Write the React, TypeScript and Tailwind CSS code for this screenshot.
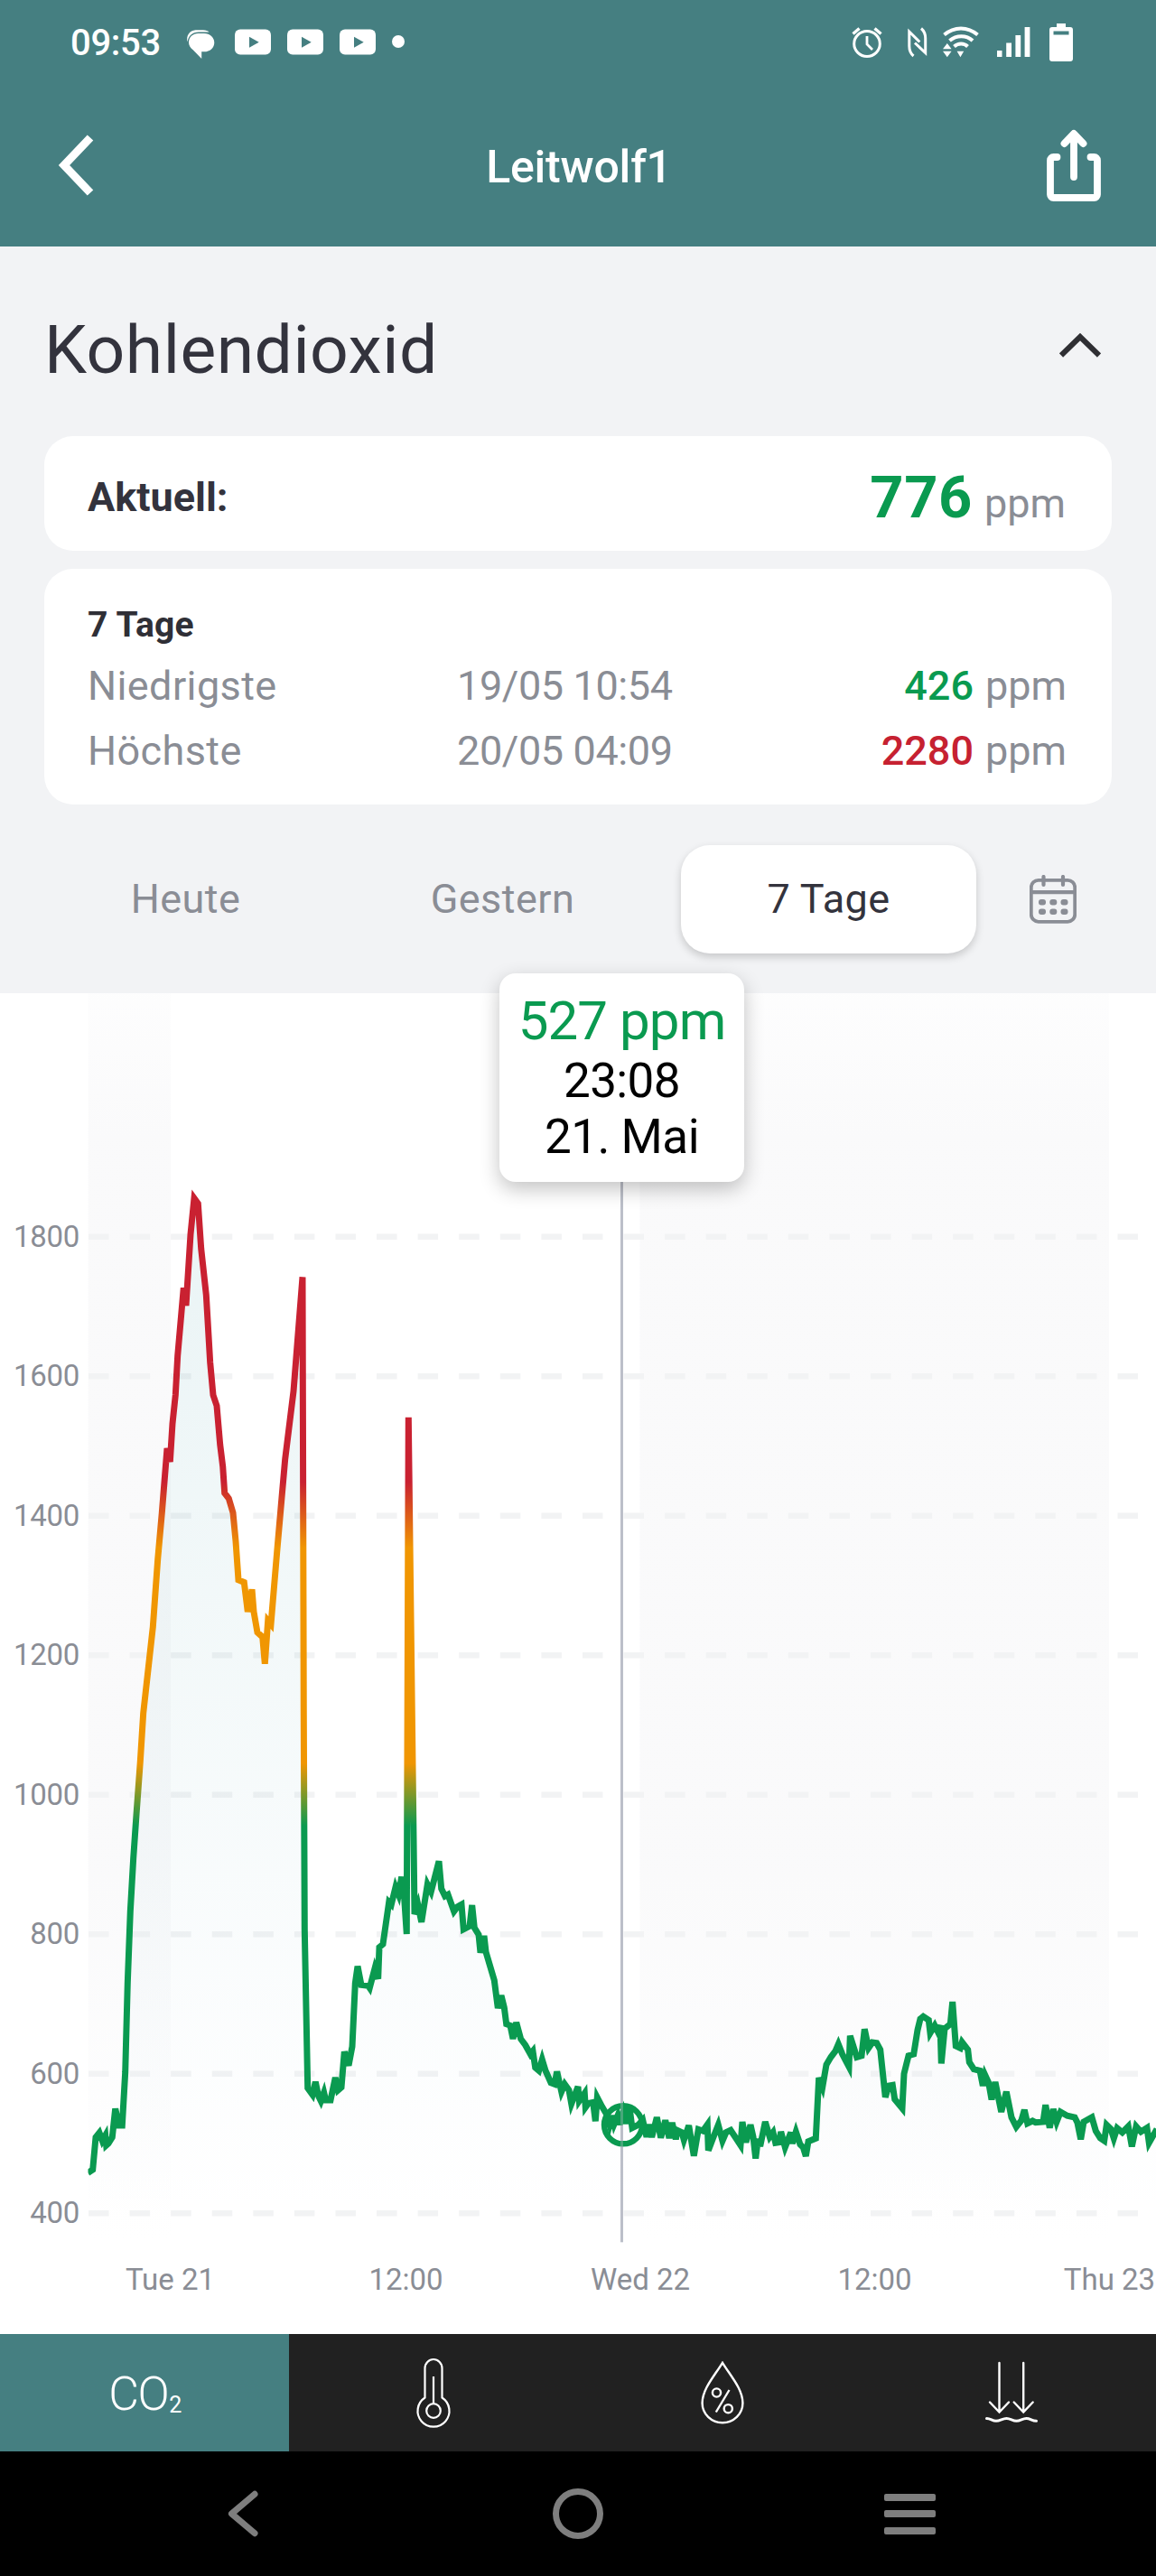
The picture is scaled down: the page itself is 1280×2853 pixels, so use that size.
import React from "react";

/* ---------- Status bar icons ---------- */

function ChatIcon() {
  return (
    <svg width="34" height="34" viewBox="0 0 34 34" className="shrink-0">
      <path d="M2.600 15.500C0.800 8.500 5 2.800 11.500 2.300H20c3 0 5.300.9 6.500 2.300H15C8 4.600 3.500 9 2.600 15.500Z" fill="#fff" />
      <path d="M14.500 6h6.500c6.500 0 11.300 4.400 11.300 10.200S27.500 26.300 21 26.300h-2.800V34l-9.500-9.800C5.800 22 4 19.200 4 16 4 10.300 8.500 6 14.500 6Z" fill="#fff" />
    </svg>
  );
}

function VideoIcon() {
  return (
    <svg width="40" height="29" viewBox="0 0 40 29" className="shrink-0">
      <rect x="0" y="0.500" width="40" height="28" rx="6" fill="#fff" />
      <path d="M16 8.700v12l10.700-6z" fill="#457f81" />
    </svg>
  );
}

function AlarmIcon() {
  return (
    <svg width="34" height="36" viewBox="0 0 34 36" fill="none" stroke="#fff" className="shrink-0">
      <ellipse cx="17" cy="19.500" rx="14.300" ry="14" strokeWidth="3" />
      <path d="M17 11v9l6 6" strokeWidth="2.800" />
      <path d="M1.500 8.500L8.500 2.500M25.500 2.500l7 6" strokeWidth="3.400" />
    </svg>
  );
}

function NfcIcon() {
  return (
    <svg width="22" height="34" viewBox="0 0 22 34" fill="none" stroke="#fff" strokeWidth="3" className="shrink-0">
      <path d="M6.500 32C3 29 1.800 25.500 1.800 21V5l11.500 11.500" />
      <path d="M15 1.500c3.500 3 4.700 6.500 4.700 11v16L8 17.500" />
    </svg>
  );
}

function WifiIcon() {
  return (
    <svg width="40" height="35" viewBox="0 0 40 35" fill="none" stroke="#fff" strokeWidth="4" className="shrink-0">
      <path d="M1.500 9.500C12.500 0 27.500 0 38.500 9.500" />
      <path d="M7.500 16C15 9.500 26 9.500 33 16" />
      <path d="M12.500 22.500c4.500-4 11-4 15 0" />
      <path d="M0 25.300h9.600L4.800 19zM0 27.700h9.600l-4.800 6.600zM15.600 27.700h7.600l-3.800 6.600z" fill="#fff" stroke="none" />
    </svg>
  );
}

function SignalIcon() {
  return (
    <svg width="37" height="33" viewBox="0 0 37 33" fill="#fff" className="shrink-0">
      <rect x="0" y="26" width="5.500" height="7" />
      <rect x="10.200" y="17.500" width="5.800" height="15.500" />
      <rect x="20.400" y="9" width="5.800" height="24" />
      <rect x="30.600" y="0" width="5.800" height="33" />
    </svg>
  );
}

function BatteryIcon() {
  return (
    <svg width="26" height="42" viewBox="0 0 26 42" className="shrink-0">
      <path
        fillRule="evenodd"
        d="M8 0h10v4h5a3 3 0 0 1 3 3v32a3 3 0 0 1-3 3H3a3 3 0 0 1-3-3V7a3 3 0 0 1 3-3h5ZM4.500 8.500v4h17v-4Z"
        fill="#fff"
      />
    </svg>
  );
}

function StatusBar() {
  return (
    <div className="flex h-24 items-center pr-[92px] pl-[78px] text-white">
      <span className="w-[100px] whitespace-nowrap text-[40px] leading-[48px] font-medium tracking-[-0.3px]">09:53</span>
      <div className="ml-[27px] flex items-center">
        <ChatIcon />
        <div className="mb-[3px] ml-[21px] flex gap-[18px]">
          <VideoIcon />
          <VideoIcon />
          <VideoIcon />
        </div>
        <span className="mb-[5px] ml-[18px] size-[14px] rounded-full bg-white" />
      </div>
      <div className="ml-auto flex items-center pb-[3px]">
        <AlarmIcon />
        <span className="ml-[28px]"><NfcIcon /></span>
        <span className="ml-[17px]"><WifiIcon /></span>
        <span className="ml-[20px]"><SignalIcon /></span>
        <span className="ml-[21px]"><BatteryIcon /></span>
      </div>
    </div>
  );
}

/* ---------- Header ---------- */

function Header() {
  return (
    <div className="flex h-[177px] items-center justify-between pr-[60px] pl-[62px] text-white">
      <svg width="62" height="68" viewBox="0 0 62 68" fill="none" stroke="#fff" strokeWidth="9" className="mb-[3px]">
        <path d="M38 3.500L9 34l29 30.500" />
      </svg>
      <h1 className="text-[50px] leading-[60px] font-medium tracking-[-0.2px]">Leitwolf1</h1>
      <svg
        width="62"
        height="82"
        viewBox="0 0 62 82"
        fill="none"
        stroke="#fff"
        strokeWidth="7.800"
        strokeLinecap="round"
        strokeLinejoin="round"
        className="mb-[4px]"
      >
        <path d="M12.500 32H8.500a3.500 3.500 0 0 0-3.500 3.500V73.500a3.500 3.500 0 0 0 3.500 3.500h45a3.500 3.500 0 0 0 3.500-3.500V35.500a3.500 3.500 0 0 0-3.500-3.500H49.500" />
        <path d="M31 54V7M20.500 17L31 6l10.500 11" />
      </svg>
    </div>
  );
}

/* ---------- Summary ---------- */

function ExtremeRow({ label, time, value, tone }: { label: string; time: string; value: string; tone: string }) {
  return (
    <div className="flex h-[72px] items-center text-[45px] leading-[54px] text-[#8a8d95]">
      <span className="w-[409px] tracking-[0.4px]">{label}</span>
      <span className="tracking-[-0.4px]">{time}</span>
      <span className="ml-auto flex items-baseline gap-[13px]">
        <span className={tone}>{value}</span>
        <span>ppm</span>
      </span>
    </div>
  );
}

function Summary() {
  return (
    <div className="px-[49px]">
      <div className="flex h-[210px] items-center justify-between pt-[18px]">
        <h2 className="text-[75px] leading-[90px] tracking-[0.5px] text-[#33333d]">Kohlendioxid</h2>
        <svg
          width="46"
          height="27"
          viewBox="0 0 46 27"
          fill="none"
          stroke="#2f2f33"
          strokeWidth="6"
          className="mr-[12px] mb-[9px]"
        >
          <path d="M2 24.500L23 4l21 20.500" />
        </svg>
      </div>
      <div className="flex h-[127px] items-center justify-between rounded-[32px] bg-white pt-[8px] pr-[51px] pl-[48px]">
        <span className="text-[45px] leading-[54px] font-bold text-[#33333d]">Aktuell:</span>
        <span className="flex items-baseline gap-[13px]">
          <span className="text-[65px] leading-[78px] font-bold tracking-[0.6px] text-[#0a9a50]">776</span>
          <span className="text-[45px] leading-[54px] text-[#8a8d95]">ppm</span>
        </span>
      </div>
      <div className="mt-5 h-[261px] rounded-[32px] bg-white pt-[30px] pr-[50px] pl-[48px]">
        <div className="text-[39px] leading-[64px] font-bold tracking-[0.2px] text-[#2f2f36]">7 Tage</div>
        <ExtremeRow label="Niedrigste" time="19/05 10:54" value="426" tone="font-medium text-[#0a9a50]" />
        <ExtremeRow label="Höchste" time="20/05 04:09" value="2280" tone="font-medium text-[#c62131]" />
      </div>
    </div>
  );
}

function RangeTabs() {
  return (
    <div className="mt-[45px] mb-[44px] flex h-[120px] items-center pl-[42px] text-center text-[45px] leading-[54px] tracking-[0.45px] text-[#8a8d95]">
      <span className="w-[327px]">Heute</span>
      <span className="ml-[24px] w-[327px]">Gestern</span>
      <span className="ml-[34px] flex h-[120px] w-[327px] items-center justify-center rounded-[32px] bg-white text-[#33333d] shadow-[0_4px_10px_rgba(0,0,0,0.18)]">
        7 Tage
      </span>
      <svg width="52" height="54" viewBox="0 0 52 54" fill="none" stroke="#8a8d95" className="ml-[59px]">
        <rect x="1.800" y="5.800" width="48.400" height="46" rx="8" strokeWidth="3.800" />
        <path d="M2 19.200h48" strokeWidth="4.200" />
        <path d="M15.500 2v9M37 2v9" strokeWidth="4.200" strokeLinecap="round" />
        {[30, 40.5].map((y) =>
          [14, 26.3, 38.5].map((x) => (
            <rect key={`${x}-${y}`} x={x - 4} y={y - 3} width="8" height="6.500" rx="3" fill="#8a8d95" stroke="none" />
          )),
        )}
      </svg>
    </div>
  );
}

/* ---------- Chart ---------- */

const series =
  "97.3,2406.5 102.7,2403 106,2367 110,2362 113.3,2371 116.7,2365 117.7,2376 120,2374 124.3,2367 127.7,2335.5 131.7,2354 135.3,2354 138.7,2295 141.3,2196 144.3,2117 147.7,2057.7 151,2010 155.3,1951 158.7,1897 169.3,1802 174.7,1727 179.3,1675.4 185,1604 188.3,1619 191,1576.6 194.3,1545 196.7,1501.4 203.3,1426.3 206,1446 211,1367 215,1327 219.3,1333 222.7,1383 228.3,1434 232.7,1509 236,1545 240,1557 243.7,1600 246.7,1624 248.7,1653.7 253.3,1659.6 258,1675.4 261,1707 264,1749.8 270.3,1752.5 274.3,1785 279,1760.4 281,1785 285,1808 290.7,1813 293.3,1842.7 296.7,1795 300,1799 306.7,1719 315.7,1616 325,1541 335,1414.4 335.7,1675 336.3,1900 337.3,2136.8 340.7,2312.7 346,2320 349.3,2305.7 352.7,2321.7 355.3,2327 358.7,2317.5 360.7,2326 366,2326 371.3,2301 374.3,2315 378,2311.7 381.3,2272.3 386,2287.7 390,2266.7 393.3,2196.7 396,2177.7 400,2198.3 407.7,2199.3 409.3,2201.7 415,2180 418.7,2191.7 420,2156.7 424,2153.3 430.7,2106.7 433.3,2109.3 438,2090 441.3,2098.3 444.7,2078.7 447.3,2096.7 450.3,2142 452.3,1569.8 459,2120 462.7,2109.3 466.7,2128.7 473.3,2087 477.3,2095 486,2061.3 488.7,2091.7 492.7,2100 496,2098.3 502.7,2117 506.7,2111.7 511,2109.3 513.3,2136.7 520,2133.3 522.7,2110 525.3,2135 530,2142.7 532,2162.7 536,2144 538,2161.7 547.3,2193.3 551.3,2224 555,2210 558.3,2223.3 560.7,2241.7 565,2243.3 568,2258 571.7,2240 576.7,2258.3 581.7,2265 587.3,2275 590,2271.7 592.7,2290 596.7,2293.3 600.3,2281 604,2293.3 610,2306.7 614,2308.3 616.7,2294.3 621.7,2316.7 625.3,2308.3 630,2315 632.7,2330 640,2311 641.3,2327 647.3,2318.3 648.3,2334 651.7,2329.3 656.7,2328.3 659.3,2349.3 661.3,2323 666.7,2333.3 671.7,2341.7 675,2353.3 677.7,2343 680,2352.7 684,2343 686,2353 690,2340 692.7,2352 696.7,2331.7 700,2356.7 706.7,2353.3 711.7,2348 716,2366.7 719,2353 721.7,2367 727.3,2345 731.7,2367.7 736.7,2348.3 741,2368 744.3,2351 748.3,2369.3 750,2359.3 755,2361.7 757.3,2370 762.7,2354 768.3,2387.7 773.3,2358.3 778.3,2360 783.3,2353 784.3,2381.7 790,2366.7 795.3,2353.3 800,2371 804,2361.7 809,2359.3 815,2368.3 820,2376 822,2350 826,2372.7 831,2353.3 834,2366.7 836.7,2390.7 839.3,2369 841.7,2377 847.3,2350 852.3,2366.7 856,2361.7 858.7,2373.3 862.7,2372.7 864.7,2361 869.3,2378.3 875.7,2361.7 877.3,2374 881.3,2361 886,2375 889.3,2378.3 892.3,2388 895,2371.7 903.3,2368.3 906.7,2301.3 910.7,2311.7 915,2286.7 920,2278.3 925,2271.7 928.3,2264 932.7,2275 940,2289 941.3,2254.7 948.7,2278.3 954,2276.7 957.3,2247.3 961.7,2268.3 966,2262 970.7,2262.7 974.7,2270 980.3,2322.7 984,2310 988.3,2309.3 990.7,2325 999,2335 1001,2296.7 1006,2276.7 1011.7,2275 1016,2248.3 1019,2236 1022.3,2233.3 1028.3,2237.3 1030,2251.7 1035,2243.3 1038.3,2250 1041,2243 1042.3,2285.3 1046,2246.7 1052.3,2241.7 1054.7,2217 1058.3,2266 1063.3,2268.3 1065.3,2261.7 1071.7,2270 1073.3,2284 1078.3,2291.7 1085,2293.3 1088.3,2310 1090.7,2298 1094.7,2306.7 1098,2325.3 1102,2306 1108.7,2339 1114.3,2316.7 1120,2345 1125.3,2355.5 1131,2348.3 1134.3,2336.7 1137.7,2351.7 1143.3,2349 1146.7,2350.7 1155,2350 1157.7,2331.3 1162.3,2356.7 1166.3,2336 1170,2350 1174.3,2339 1181.7,2343.3 1190,2345 1193,2351 1196.7,2369.3 1200,2350 1209,2345 1213.3,2360 1218.3,2368 1222.7,2371 1225.3,2353.3 1230,2358 1233.3,2368.3 1237,2357 1242.7,2361.7 1249.3,2355 1253.3,2377.3 1258,2355 1263.3,2361 1270,2356.7 1272.3,2373.3 1281,2358";

const gridValues = [1800, 1600, 1400, 1200, 1000, 800, 600, 400];

const gridY = (value: number) => 1369.7 + ((1800 - value) / 200) * 154.5;

const timeLabels = [
  { x: 188.5, text: "Tue 21" },
  { x: 449.5, text: "12:00" },
  { x: 709, text: "Wed 22" },
  { x: 968.5, text: "12:00" },
  { x: 1228.5, text: "Thu 23" },
];

function Chart() {
  return (
    <div className="relative h-[1485px] bg-white">
      <svg width="1280" height="1485" viewBox="0 1100 1280 1485" className="block">
        <defs>
          <linearGradient id="band" gradientUnits="userSpaceOnUse" x1="0" y1="1100" x2="0" y2="2480">
            <stop offset="0" stopColor="#f9f9fa" stopOpacity="0.3" />
            <stop offset="0.120" stopColor="#f9f9fa" stopOpacity="0.85" />
            <stop offset="0.700" stopColor="#f9f9fa" stopOpacity="0.85" />
            <stop offset="1" stopColor="#f9f9fa" stopOpacity="0" />
          </linearGradient>
          <linearGradient id="level" gradientUnits="userSpaceOnUse" x1="0" y1="1300" x2="0" y2="2420">
            <stop offset="0.305" stopColor="#c92131" />
            <stop offset="0.370" stopColor="#f09602" />
            <stop offset="0.583" stopColor="#f09602" />
            <stop offset="0.645" stopColor="#0a9a50" />
          </linearGradient>
          <linearGradient id="area" gradientUnits="userSpaceOnUse" x1="0" y1="1320" x2="0" y2="2460">
            <stop offset="0" stopColor="#128291" stopOpacity="0.09" />
            <stop offset="0.500" stopColor="#128291" stopOpacity="0.045" />
            <stop offset="1" stopColor="#2c86b0" stopOpacity="0" />
          </linearGradient>
        </defs>
        <rect x="97.700" y="1100" width="91.300" height="1380" fill="url(#band)" />
        <rect x="708.500" y="1100" width="519.500" height="1380" fill="url(#band)" />
        {gridValues.map((v) => (
          <path key={v} d={`M98 ${gridY(v)}H1262`} stroke="#f2f3f4" strokeWidth="6.400" strokeDasharray="22.500 23.080" />
        ))}
        <polygon points={`${series} 1281,2460 97.3,2460`} fill="url(#area)" />
        <path d="M688.500 1300V2483.300" stroke="#bcbfc9" strokeWidth="3" />
        <svg x="97.500" y="1100" width="1182.500" height="1400" viewBox="97.500 1100 1182.500 1400">
          <polyline points={series} fill="none" stroke="url(#level)" strokeWidth="7" />
        </svg>
        <circle cx="690" cy="2353.300" r="21" fill="none" stroke="#0a9a50" strokeWidth="6.400" />
        <path d="M688.500 2325V2483.300" stroke="#bcbfc9" strokeOpacity="0.35" strokeWidth="3" />
        <g fill="#8a8d95" fontSize="33">
          {gridValues.map((v) => (
            <text key={v} x="88" y={gridY(v) + 11} textAnchor="end" letterSpacing="-0.300">
              {v}
            </text>
          ))}
          {timeLabels.map((t) => (
            <text key={t.x} x={t.x} y="2536.300" textAnchor="middle">
              {t.text}
            </text>
          ))}
        </g>
      </svg>
      <div className="absolute top-[-22px] left-[553px] flex h-[231px] w-[271px] flex-col items-center rounded-[18px] bg-white pt-[16px] text-black shadow-[0_8px_22px_rgba(0,0,0,0.24)]">
        <div className="text-[60px] leading-[74px] tracking-[-0.9px] whitespace-nowrap text-[#0a9a50]">527 ppm</div>
        <div className="text-[53px] leading-[59px] tracking-[-0.6px]">23:08</div>
        <div className="text-[53px] leading-[65px] tracking-[-0.5px] whitespace-nowrap">21. Mai</div>
      </div>
    </div>
  );
}

/* ---------- Bottom bars ---------- */

function SensorTabs() {
  return (
    <div className="grid h-[130px] grid-cols-4 bg-[#212121] text-white">
      <div className="flex items-center justify-center bg-[#457f81]">
        <span className="flex items-baseline pt-[3px] text-[52px] leading-[60px] font-light tracking-[-1.5px]">
          CO
          <span className="relative top-[3px] ml-[1px] text-[25px] leading-none font-normal">2</span>
        </span>
      </div>
      <div className="flex items-center justify-center">
        <svg width="40" height="78" viewBox="0 0 40 78" fill="none" stroke="#fff" strokeWidth="2.200">
          <path d="M10.500 44.500V12a9.500 10 0 0 1 19 0v32.500A17.500 17.500 0 1 1 10.500 44.500Z" />
          <circle cx="20" cy="59" r="7.800" />
          <path d="M20 21v30" />
        </svg>
      </div>
      <div className="flex items-center justify-center">
        <svg width="48" height="70" viewBox="0 0 48 70" fill="none" stroke="#fff" strokeWidth="2.400">
          <path d="M24 1.800C15 16.500 1.600 31 1.600 46.500a22.400 21.700 0 0 0 44.800 0C46.400 31 33 16.500 24 1.800Z" />
          <circle cx="17.500" cy="35" r="4.600" />
          <circle cx="30.300" cy="52.700" r="4.600" />
          <path d="M31.500 32L16.800 56.500" />
        </svg>
      </div>
      <div className="flex items-center justify-center">
        <svg width="58" height="68" viewBox="0 0 58 68" fill="none" stroke="#fff" strokeWidth="2.400" strokeLinecap="round" className="mb-[3px]">
          <path d="M15.500 2v54M5 45.500l10.500 11L26 45.500M42.200 2v54M31.700 45.500l10.500 11 10.500-11" />
          <path d="M1.500 63.500c4.500 0 6 2.800 10.500 2.800s7-2.800 11.500-2.800 6.500 2.800 11 2.800 6.500-2.800 11-2.800 6 2.800 11 2.800" strokeWidth="3" />
        </svg>
      </div>
    </div>
  );
}

function SystemNav() {
  return (
    <div className="flex h-[138px] items-center bg-black pl-[251px]">
      <svg width="36" height="52" viewBox="0 0 36 52" fill="none" stroke="#7e7e7e" strokeWidth="7" strokeLinecap="round" strokeLinejoin="round">
        <path d="M31 4.300L5.500 26 31 47.700" />
      </svg>
      <span className="ml-[325px] size-[56px] rounded-full border-[7px] border-[#7e7e7e]" />
      <div className="ml-[311px] flex w-[57px] flex-col gap-[10.5px]">
        <span className="h-[8px] rounded-[2px] bg-[#7e7e7e]" />
        <span className="h-[8px] rounded-[2px] bg-[#7e7e7e]" />
        <span className="h-[8px] rounded-[2px] bg-[#7e7e7e]" />
      </div>
    </div>
  );
}

export default function App() {
  return (
    <div className="w-[1280px] overflow-hidden bg-[#f2f3f5] font-['Roboto',sans-serif]">
      <div className="bg-[#457f81]">
        <StatusBar />
        <Header />
      </div>
      <Summary />
      <RangeTabs />
      <Chart />
      <SensorTabs />
      <SystemNav />
    </div>
  );
}
